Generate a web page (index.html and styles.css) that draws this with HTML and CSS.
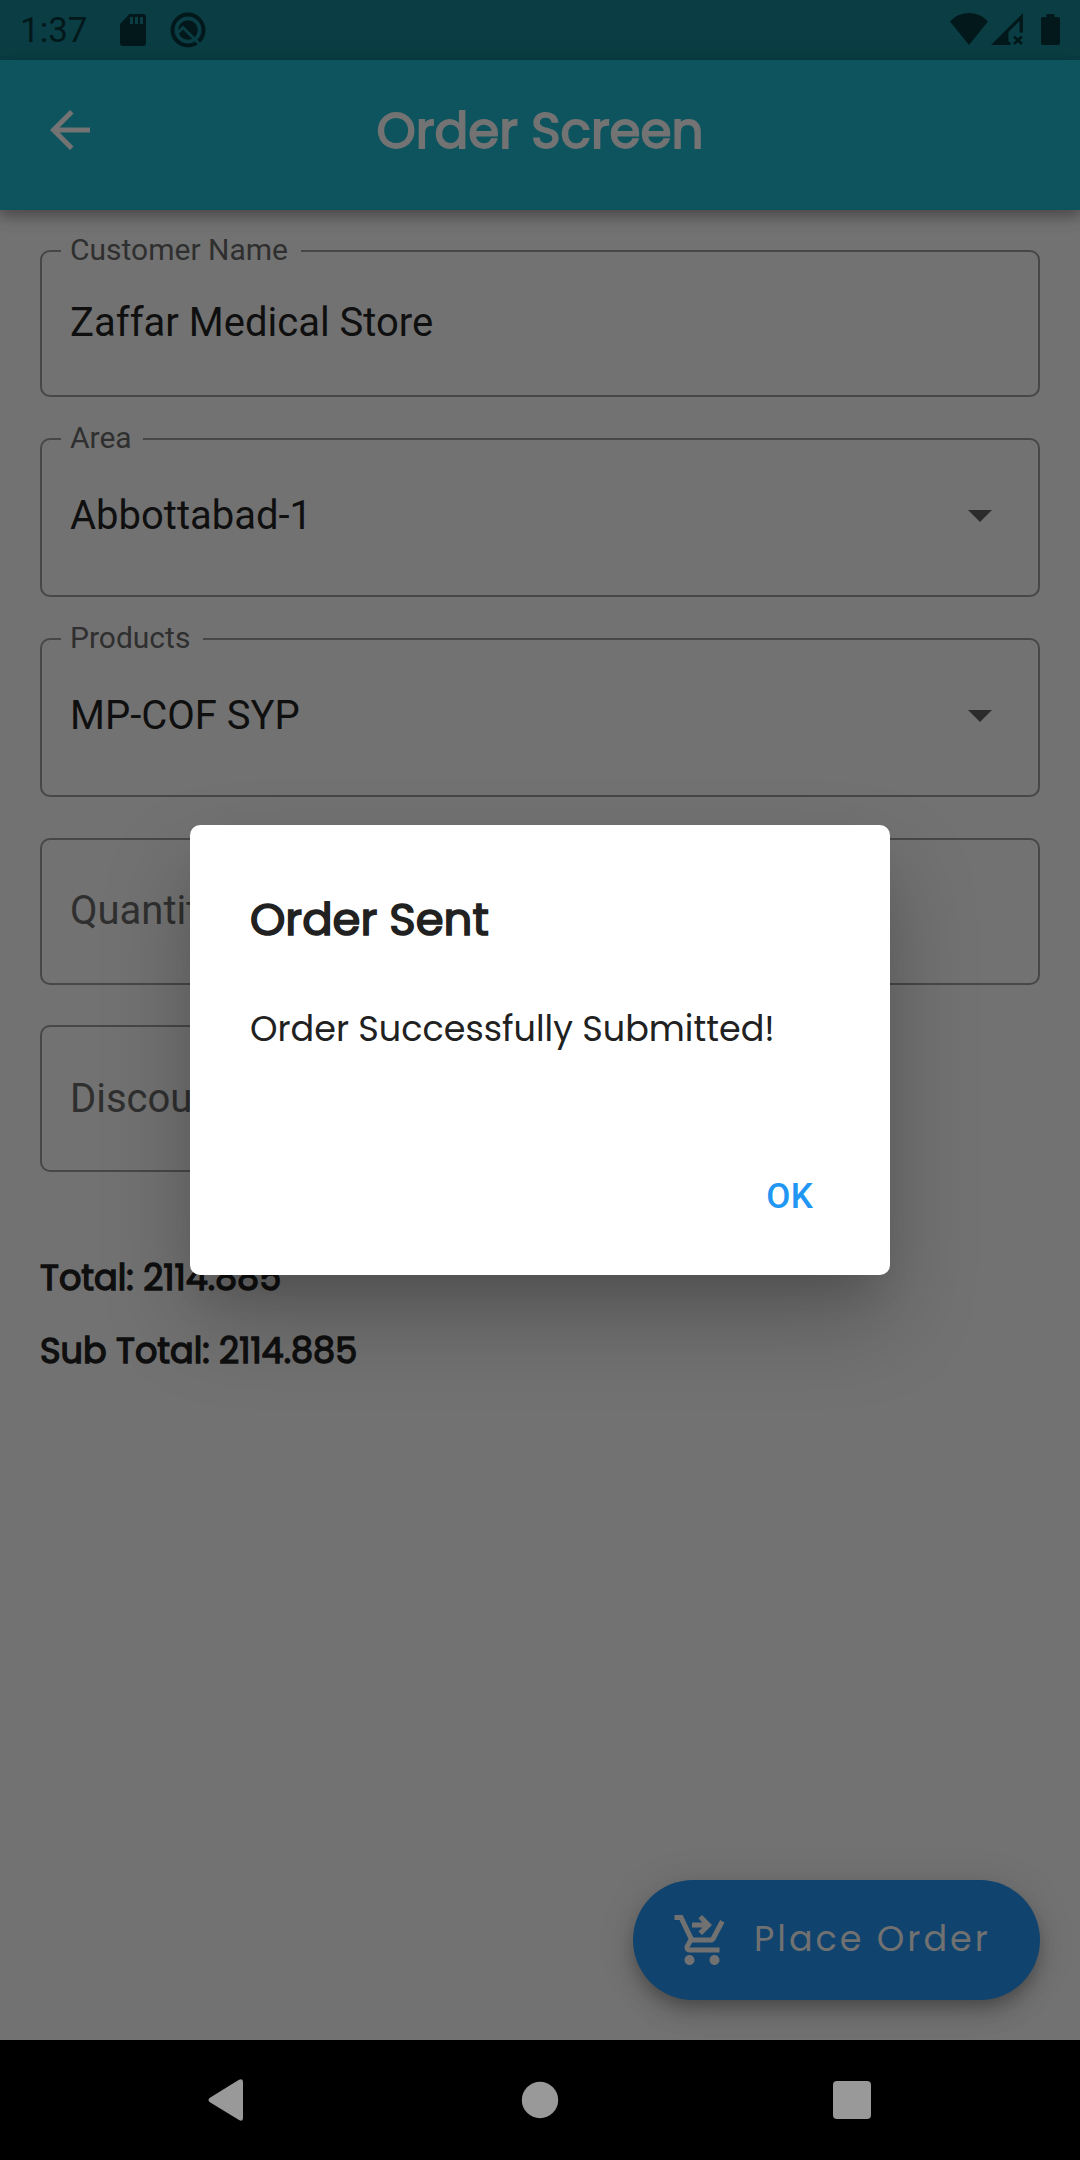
FILE: index.html
```html
<!DOCTYPE html>
<html lang="en">
<head>
<meta charset="utf-8">
<title>Order Screen</title>
<link rel="stylesheet" href="styles.css">
</head>
<body>
<div class="screen">
  <header class="statusbar">
    <span class="clock">1:37</span>
    <svg class="sd" width="26" height="32" viewBox="0 0 26 32"><path fill-rule="evenodd" d="M9.500 0H23a3 3 0 0 1 3 3v26a3 3 0 0 1-3 3H3a3 3 0 0 1-3-3V10zM10 3v7h3V3zm5 0v7h3V3zm5 0v7h3V3z"/></svg>
    <svg class="q" width="36" height="36" viewBox="0 0 36 36"><circle cx="18" cy="18" r="15.500" fill="none" stroke="#03181b" stroke-width="4"/><circle cx="18" cy="18" r="9.800"/><path d="M7 21.500L13 15.500 30.500 33" fill="none" stroke="#0a3e44" stroke-width="3"/></svg>
    <span class="spacer"></span>
    <svg class="wifi" width="38" height="32" viewBox="0 0 38 32"><path d="M0 8.500C10.500-2.800 27.500-2.800 38 8.500L19 32z"/></svg>
    <svg class="signal" width="33" height="32" viewBox="0 0 33 32"><path fill-rule="evenodd" d="M32 0v19.500h-3.500V8L17.500 19v10h2v3H0z"/><path d="M23 23.500l8 7.500M31 23.500L23 31" stroke="#03181b" stroke-width="2.600"/></svg>
    <svg class="battery" width="19" height="31" viewBox="0 0 19 31"><path d="M5.500 0h8v3H17a2 2 0 0 1 2 2v24a2 2 0 0 1-2 2H2a2 2 0 0 1-2-2V5a2 2 0 0 1 2-2h3.500z"/></svg>
  </header>
  <div class="appbar">
    <svg class="back" width="60" height="60" viewBox="0 0 24 24"><path d="M20 11H7.830l5.590-5.590L12 4l-8 8 8 8 1.410-1.410L7.830 13H20v-2z"/></svg>
    <h1 class="title">Order Screen</h1>
    <span class="balance"></span>
  </div>
  <main class="form">
    <div class="field"><span class="label name-label">Customer Name</span><span class="value">Zaffar Medical Store</span></div>
    <div class="field select"><span class="label area-label">Area</span><span class="value">Abbottabad-1</span><i class="caret"></i></div>
    <div class="field select"><span class="label products-label">Products</span><span class="value">MP-COF SYP</span><i class="caret"></i></div>
    <div class="field quantity"><span class="hint">Quantity</span></div>
    <div class="field discount"><span class="hint">Discount</span></div>
    <div class="totals">
      <p class="total">Total: 2114.885</p>
      <p class="total subtotal">Sub Total: 2114.885</p>
    </div>
    <div class="fab">
      <svg width="60" height="60" viewBox="0 0 24 24"><path d="M7 18c-1.100 0-1.990.9-1.990 2S5.900 22 7 22s2-.9 2-2-.9-2-2-2zm10 0c-1.100 0-1.990.9-1.990 2s.89 2 1.990 2 2-.9 2-2-.9-2-2-2zm-8.900-5h7.450c.75 0 1.410-.41 1.750-1.030L21 4.960 19.250 4l-3.700 7H8.530L4.270 2H1v2h2l3.600 7.590-1.350 2.440C4.520 15.370 5.480 17 7 17h12v-2H7l1.100-2zM12 2l4 4-4 4-1.410-1.410L12.170 7H8V5h4.170l-1.590-1.590L12 2z"/></svg>
      <span class="fab-text">Place Order</span>
    </div>
  </main>
  <nav class="navbar">
    <svg width="36" height="42" viewBox="0 0 36 42"><path d="M31 .8Q35-1 35 3v36q0 4-4 2L1.500 23Q-.5 21 1.500 19z"/></svg>
    <svg width="40" height="38" viewBox="0 0 40 38"><circle cx="21" cy="19" r="18.200"/></svg>
    <svg width="38" height="38" viewBox="0 0 38 38"><rect width="38" height="38" rx="4"/></svg>
  </nav>
  <section class="dialog">
    <h2 class="dialog-title">Order Sent</h2>
    <p class="dialog-text">Order Successfully Submitted!</p>
    <span class="ok">OK</span>
  </section>
</div>
</body>
</html>
```

FILE: styles.css
```css
* { box-sizing: border-box; }
body { margin: 0; background: #727272; font-family: Roboto, sans-serif; }
h1, h2, p { margin: 0; }
svg { display: block; flex: none; }

.screen { position: relative; width: 1080px; height: 2160px; display: flex; flex-direction: column; overflow: hidden; }

.statusbar { height: 60px; background: #0a3e44; display: flex; align-items: flex-start; padding: 0 20px 0 20px; fill: #03181b; color: #03181b; }
.clock { width: 100px; font-size: 35px; line-height: 62px; }
.sd { margin-top: 14px; }
.q { margin: 12px 0 0 24px; }
.spacer { flex: 1; }
.wifi { margin-top: 13px; }
.signal { margin: 13px 17px 0 3px; }
.battery { margin-top: 14px; }

.appbar { height: 150px; background: #0e545e; display: flex; align-items: center; padding: 0 40px 10px; z-index: 1; box-shadow: 0 5px 10px rgba(0,0,0,.2), 0 10px 13px rgba(0,0,0,.1), 0 2px 25px rgba(0,0,0,.1); }
.back { fill: #737373; }
.title { flex: 1; text-align: center; padding-top: 2px; font: 400 50px/70px Poppins, Inter, sans-serif; color: #737373; -webkit-text-stroke: 1.8px #737373; }
.balance { width: 60px; }

.form { flex: 1; display: flex; flex-direction: column; align-items: stretch; padding: 40px; }
.field { position: relative; height: 147px; flex: none; border: 2px solid #474747; border-radius: 10px; padding: 0 28px; display: flex; align-items: center; font-size: 40px; margin-bottom: 41px; color: #0f0f0f; }
.field.select { height: 159px; justify-content: space-between; }
.field.quantity { margin-bottom: 40px; }
.field.discount { width: 480px; margin: 0; }
.label { position: absolute; left: 19px; top: -20px; background: #727272; padding: 0 0 0 9px; font-size: 30px; line-height: 36px; color: #2f2f2f; }
.name-label { width: 240px; }
.area-label { width: 82px; }
.products-label { width: 142px; }
.value { line-height: 50px; padding-bottom: 2px; }
.select .value { padding-bottom: 4px; }
.hint { color: #2f2f2f; padding-bottom: 2px; }
.discount .hint { padding-bottom: 0; }
.caret { border: 12px solid transparent; border-top-color: #2c2c2c; border-bottom: 0; margin: 0 18px 3px 0; }

.totals { padding-top: 79px; }
.total { font: 400 35px/53px Poppins, Inter, sans-serif; color: #0f0f0f; -webkit-text-stroke: 1.4px #0f0f0f; }
.subtotal { margin-top: 20px; }

.fab { margin-top: auto; align-self: flex-end; width: 407px; height: 120px; border-radius: 60px; background: #10446f; display: flex; align-items: center; padding-left: 39px; gap: 22px; fill: #717171; color: #717171; box-shadow: 0 8px 13px -2px rgba(0,0,0,.2), 0 15px 25px rgba(0,0,0,.13), 0 3px 40px rgba(0,0,0,.1); }
.fab-text { font: 400 35px/50px Poppins, Inter, sans-serif; letter-spacing: 3px; white-space: nowrap; padding-bottom: 3px; }

.navbar { height: 120px; background: #000; display: flex; align-items: center; padding: 0 209px 0 208px; justify-content: space-between; fill: #999; z-index: 1; }

.dialog { position: absolute; left: 190px; top: 825px; width: 700px; height: 450px; z-index: 2; border-radius: 10px; background: #fff; padding: 60px; display: flex; flex-direction: column; color: #212121; box-shadow: 0 28px 38px -18px rgba(0,0,0,.12), 0 45px 90px 0 rgba(0,0,0,.23); }
.dialog-title { font: 400 45px/70px Poppins, Inter, sans-serif; -webkit-text-stroke: 1.6px #212121; }
.dialog-text { margin-top: 49px; font: 400 35px/50px Poppins, Inter, sans-serif; white-space: nowrap; }
.ok { align-self: flex-end; margin: 118px 17px 0 0; font-weight: 500; font-size: 35px; line-height: 50px; letter-spacing: .2px; color: #2196f3; }
```
